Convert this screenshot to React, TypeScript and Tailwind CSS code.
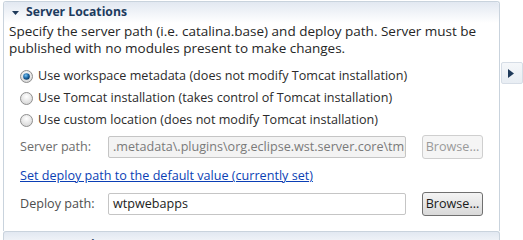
import React from "react";

function Radio({ checked }: { checked?: boolean }) {
  return (
    <svg width="13" height="13" viewBox="0 0 13 13" className="shrink-0">
      <defs>
        <radialGradient id={checked ? "rgc" : "rgu"} cx="50%" cy="35%" r="65%">
          <stop offset="0%" stopColor="#ffffff" />
          <stop offset="100%" stopColor="#d6d6d6" />
        </radialGradient>
        <radialGradient id="dot" cx="40%" cy="35%" r="60%">
          <stop offset="0%" stopColor="#7fc3ef" />
          <stop offset="60%" stopColor="#1f6fae" />
          <stop offset="100%" stopColor="#0f3f6b" />
        </radialGradient>
      </defs>
      <circle cx="6.5" cy="6.5" r="6" fill={`url(#${checked ? "rgc" : "rgu"})`} stroke="#8f8f8f" strokeWidth="1" />
      {checked && <circle cx="6.5" cy="6.5" r="3.3" fill="url(#dot)" />}
    </svg>
  );
}

function Twisty() {
  return (
    <svg width="7" height="4" viewBox="0 0 7 4" className="ml-[8px] mr-[7px]">
      <path d="M0 0 L7 0 L3.5 4 Z" fill="#1f3a5a" />
    </svg>
  );
}

export default function App() {
  const font = { fontFamily: '"Open Sans", "Noto Sans", sans-serif' };
  return (
    <div className="relative w-[523px] h-[240px] bg-white overflow-hidden text-[12.6px] text-[#2b2b2b]" style={font}>
      <div className="ml-[3px] mt-[1px] w-[497px] border border-[#c9d3dd] border-b-0 rounded-t-[3px]">
        <div className="h-[21px] flex items-center bg-gradient-to-b from-[#e2e8f1] to-[#ffffff] rounded-t-[3px]">
          <Twisty />
          <span className="font-bold text-[12.2px] text-[#1d3b5e]">Server Locations</span>
        </div>
        <div className="pl-[5px] leading-[17px] text-[13.5px] text-[#262626]">
          <p>Specify the server path (i.e. catalina.base) and deploy path. Server must be</p>
          <p>published with no modules present to make changes.</p>
        </div>
        <div className="pl-[16px] mt-[11px] flex flex-col gap-[5px]">
          <label className="flex items-center gap-[5px] h-[17px]"><Radio checked /><span>Use workspace metadata (does not modify Tomcat installation)</span></label>
          <label className="flex items-center gap-[5px] h-[17px]"><Radio /><span>Use Tomcat installation (takes control of Tomcat installation)</span></label>
          <label className="flex items-center gap-[5px] h-[17px]"><Radio /><span>Use custom location (does not modify Tomcat installation)</span></label>
        </div>
        <div className="pl-[16px] mt-[6px] flex items-center h-[24px]">
          <span className="w-[88px] text-[#6d6d6d]">Server path:</span>
          <div className="w-[298px] h-[22px] border border-[#c5c5c5] rounded-[2px] bg-[#f3f3f3] px-[4px] flex items-center overflow-hidden whitespace-nowrap text-[#7a7a7a]">.metadata\.plugins\org.eclipse.wst.server.core\tmp0</div>
          <div className="ml-[16px] w-[61px] h-[24px] border border-[#cfcfcf] rounded-[3px] bg-[#f5f5f5] flex items-center justify-center text-[#9a9a9a]">Browse...</div>
        </div>
        <div className="pl-[16px] mt-[8px] h-[17px] leading-[17px]">
          <span className="text-[#0b3fb5] underline">Set deploy path to the default value (currently set)</span>
        </div>
        <div className="pl-[16px] mt-[8px] flex items-center h-[24px]">
          <span className="w-[88px] text-[#4d4d4d]">Deploy path:</span>
          <div className="w-[298px] h-[22px] border border-[#c5c5c5] rounded-[2px] bg-white px-[4px] flex items-center text-[#222]">wtpwebapps</div>
          <div className="ml-[16px] w-[61px] h-[24px] border border-[#707070] rounded-[3px] bg-gradient-to-b from-[#f4f4f4] to-[#d9d9d9] flex items-center justify-center text-[#1a1a1a]">Browse...</div>
        </div>
        <div className="h-[15px]" />
      </div>
      <div className="ml-[3px] w-[497px] border border-[#c9d3dd] border-b-0 rounded-t-[3px] h-[20px] bg-gradient-to-b from-[#e2e8f1] to-[#ffffff] flex items-center">
        <Twisty />
        <span className="font-bold text-[12.2px] text-[#1d3b5e] translate-y-[4px]">Server Options</span>
      </div>
      <div className="absolute left-[501px] top-[62px] w-[22px] h-[22px] border border-[#d6dde6] rounded-[2px] bg-gradient-to-b from-[#f5f7fa] to-[#e8edf3] flex items-center pl-[6px]">
        <svg width="6" height="9" viewBox="0 0 6 9"><path d="M0 0 L6 4.5 L0 9 Z" fill="#1f3a5a" /></svg>
      </div>
    </div>
  );
}
